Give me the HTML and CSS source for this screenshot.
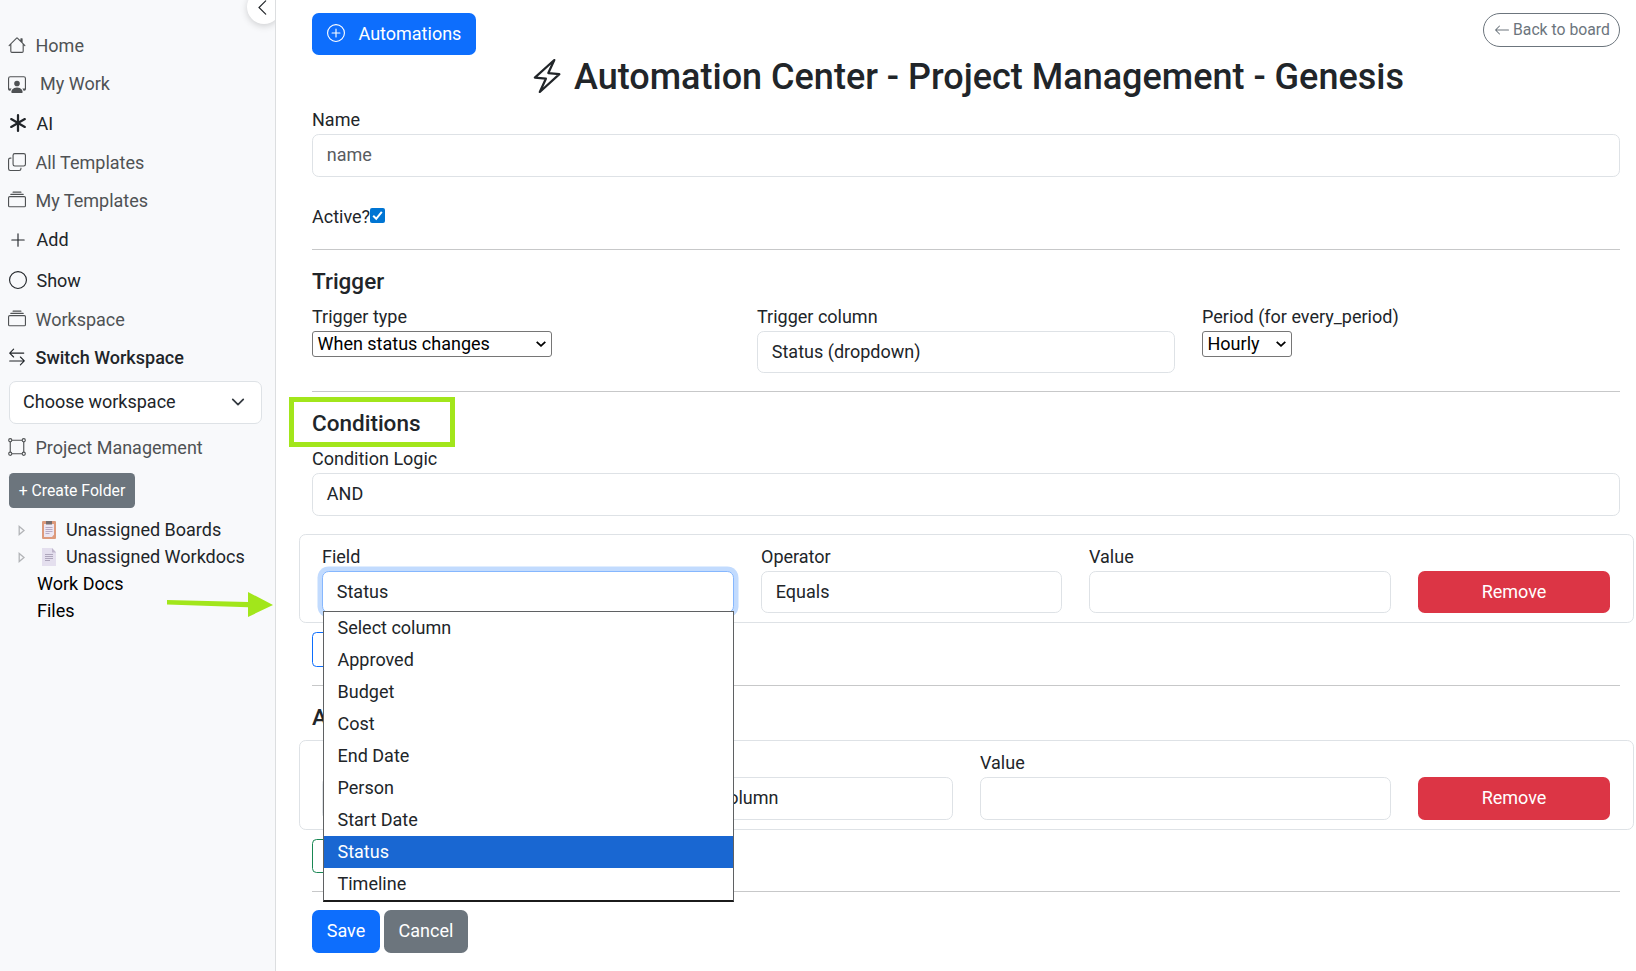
FILE: index.html
```html
<!DOCTYPE html>
<html lang="en">
<head>
<meta charset="utf-8">
<title>Automation Center</title>
<link rel="stylesheet" href="styles.css">
</head>
<body>
<div class="app">
  <aside class="sidebar">
    <div class="collapse"><svg class="ic-chev" viewBox="0 0 16 16"><path d="M11 1.7 4.7 8l6.3 6.3" fill="none" stroke="currentColor" stroke-width="1.1" stroke-linecap="round"/></svg></div>
    <nav class="nav">
      <a class="item"><svg class="ic" viewBox="0 0 16 16"><path d="M8.707 1.5a1 1 0 0 0-1.414 0L.646 8.146a.5.5 0 0 0 .708.708L2 8.207V13.5A1.5 1.5 0 0 0 3.5 15h9a1.5 1.5 0 0 0 1.5-1.5V8.207l.646.647a.5.5 0 0 0 .708-.708L13 5.793V2.5a.5.5 0 0 0-.5-.5h-1a.5.5 0 0 0-.5.5v1.293zM13 7.207V13.5a.5.5 0 0 1-.5.5h-9a.5.5 0 0 1-.5-.5V7.207l5-5z"/></svg>Home</a>
      <a class="item wide"><svg class="ic" viewBox="0 0 16 16"><path d="M4 16s-1 0-1-1 1-4 5-4 5 3 5 4-1 1-1 1zm4-5.95a2.5 2.5 0 1 0 0-5 2.5 2.5 0 0 0 0 5"/><path d="M2 1a2 2 0 0 0-2 2v9.5A1.5 1.5 0 0 0 1.5 14h.653a5.4 5.4 0 0 1 1.066-2H1V3a1 1 0 0 1 1-1h12a1 1 0 0 1 1 1v9h-2.219c.554.654.89 1.373 1.066 2h.653a1.5 1.5 0 0 0 1.5-1.5V3a2 2 0 0 0-2-2z"/></svg>My Work</a>
      <a class="item dark tall"><svg class="ic" viewBox="0 0 16 16"><path d="M8 0a1 1 0 0 1 1 1v5.268l4.562-2.634a1 1 0 1 1 1 1.732L10 8l4.562 2.634a1 1 0 1 1-1 1.732L9 9.732V15a1 1 0 1 1-2 0V9.732l-4.562 2.634a1 1 0 1 1-1-1.732L6 8 1.438 5.366a1 1 0 0 1 1-1.732L7 6.268V1a1 1 0 0 1 1-1"/></svg>AI</a>
      <a class="item"><svg class="ic" viewBox="0 0 16 16"><path fill-rule="evenodd" d="M4 2a2 2 0 0 1 2-2h8a2 2 0 0 1 2 2v8a2 2 0 0 1-2 2H6a2 2 0 0 1-2-2zm2-1a1 1 0 0 0-1 1v8a1 1 0 0 0 1 1h8a1 1 0 0 0 1-1V2a1 1 0 0 0-1-1zM2 5a1 1 0 0 0-1 1v8a1 1 0 0 0 1 1h8a1 1 0 0 0 1-1v-1h1v1a2 2 0 0 1-2 2H2a2 2 0 0 1-2-2V6a2 2 0 0 1 2-2h1v1z"/></svg>All Templates</a>
      <a class="item"><svg class="ic" viewBox="0 0 16 16"><path d="M2.5 3.5a.5.5 0 0 1 0-1h11a.5.5 0 0 1 0 1zm2-2a.5.5 0 0 1 0-1h7a.5.5 0 0 1 0 1zM0 13a1.5 1.5 0 0 0 1.5 1.5h13A1.5 1.5 0 0 0 16 13V6a1.5 1.5 0 0 0-1.5-1.5h-13A1.5 1.5 0 0 0 0 6zm1.5.5A.5.5 0 0 1 1 13V6a.5.5 0 0 1 .5-.5h13a.5.5 0 0 1 .5.5v7a.5.5 0 0 1-.5.5z"/></svg>My Templates</a>
      <a class="item dark add-item"><svg class="ic" viewBox="0 0 16 16"><path d="M8 2a.5.5 0 0 1 .5.5v5h5a.5.5 0 0 1 0 1h-5v5a.5.5 0 0 1-1 0v-5h-5a.5.5 0 0 1 0-1h5v-5A.5.5 0 0 1 8 2"/></svg>Add</a>
      <a class="item dark tall"><svg class="ic" viewBox="0 0 16 16"><path d="M8 15A7 7 0 1 1 8 1a7 7 0 0 1 0 14m0 1A8 8 0 1 0 8 0a8 8 0 0 0 0 16"/></svg>Show</a>
      <a class="item"><svg class="ic" viewBox="0 0 16 16"><path d="M2.5 3.5a.5.5 0 0 1 0-1h11a.5.5 0 0 1 0 1zm2-2a.5.5 0 0 1 0-1h7a.5.5 0 0 1 0 1zM0 13a1.5 1.5 0 0 0 1.5 1.5h13A1.5 1.5 0 0 0 16 13V6a1.5 1.5 0 0 0-1.5-1.5h-13A1.5 1.5 0 0 0 0 6zm1.5.5A.5.5 0 0 1 1 13V6a.5.5 0 0 1 .5-.5h13a.5.5 0 0 1 .5.5v7a.5.5 0 0 1-.5.5z"/></svg>Workspace</a>
      <a class="item dark bold"><svg class="ic" viewBox="0 0 16 16"><path d="M14 4.5H1.6M5 1 1.5 4.5 5 8M1.5 11.5h12.9M11 8l3.5 3.5L11 15" fill="none" stroke="currentColor" stroke-linecap="round" stroke-linejoin="round"/></svg>Switch Workspace</a>
    </nav>
    <div class="ws-select"><span>Choose workspace</span><svg class="ic-down" viewBox="0 0 16 16"><path d="m2 5 6 6 6-6" fill="none" stroke="#343a40" stroke-width="2" stroke-linecap="round" stroke-linejoin="round"/></svg></div>
    <a class="item project"><svg class="ic" viewBox="0 0 16 16"><g fill="none" stroke="currentColor"><circle cx="2" cy="2" r="1.4"/><circle cx="14" cy="2" r="1.4"/><circle cx="2" cy="14" r="1.4"/><circle cx="14" cy="14" r="1.4"/><path d="M3.5 2h9M3.5 14h9M2 3.5v9M14 3.5v9"/></g></svg>Project Management</a>
    <button class="create">+ Create Folder</button>
    <div class="tree">
      <div class="node"><svg class="tri" viewBox="0 0 8 10"><path d="M1.2 1v8l4.8-4z" fill="none" stroke="#b3b5b8" stroke-width="1.3"/></svg><svg class="doc" viewBox="0 0 14 18"><rect width="14" height="18" rx="1" fill="#dd9a7c"/><path d="M2 3h10v10.5L10 16H2z" fill="#ece6f2"/><path d="M4 0h6v3.5H4z" fill="#766c6c"/><path d="M3.5 6.5h7M3.5 8.5h7M3.5 10.5h7M3.5 12.5h4" stroke="#a99bb8" stroke-width=".8"/></svg>Unassigned Boards</div>
      <div class="node"><svg class="tri" viewBox="0 0 8 10"><path d="M1.2 1v8l4.8-4z" fill="none" stroke="#b3b5b8" stroke-width="1.3"/></svg><svg class="doc" viewBox="0 0 14 18"><path d="M0 0h10l4 4v14H0z" fill="#e4dfee"/><path d="m10 0 4 4.5h-4z" fill="#bfb6cc"/><path d="M3 6.5h8M3 8.5h8M3 10.5h8M3 12.5h5" stroke="#a79fb5" stroke-width=".9"/></svg>Unassigned Workdocs</div>
      <div class="leaf">Work Docs</div>
      <div class="leaf">Files</div>
    </div>
    <svg class="arrow" viewBox="0 0 106 26"><path d="M0 8 81 10V0l25 13-25 12V15.2L0 12.5z" fill="#a2e61b"/></svg>
  </aside>

  <main class="main">
    <header class="top">
      <button class="btn primary auto"><svg class="ic" viewBox="0 0 16 16"><path d="M8 15A7 7 0 1 1 8 1a7 7 0 0 1 0 14m0 1A8 8 0 1 0 8 0a8 8 0 0 0 0 16"/><path d="M8 4a.5.5 0 0 1 .5.5v3h3a.5.5 0 0 1 0 1h-3v3a.5.5 0 0 1-1 0v-3h-3a.5.5 0 0 1 0-1h3v-3A.5.5 0 0 1 8 4"/></svg><span>Automations</span></button>
      <button class="back"><svg class="ic-back" viewBox="0 0 16 16"><path fill-rule="evenodd" d="M15 8a.5.5 0 0 0-.5-.5H2.707l3.147-3.146a.5.5 0 1 0-.708-.708l-4 4a.5.5 0 0 0 0 .708l4 4a.5.5 0 0 0 .708-.708L2.707 8.5H14.5A.5.5 0 0 0 15 8"/></svg><span>Back to board</span></button>
    </header>
    <h2 class="title"><svg class="bolt" viewBox="0 0 16 16"><path d="M11.25.9 2.6 8.7l4.9.5-2.7 5.9 8.7-7.9-4.9-.5z" fill="none" stroke="currentColor" stroke-width="1" stroke-linejoin="round"/></svg><span>Automation Center - Project Management - Genesis</span></h2>

    <label class="label first">Name</label>
    <div class="control muted">name</div>
    <div class="active"><span>Active?</span><svg class="check" viewBox="0 0 15 15"><rect width="15" height="15" rx="2" fill="#0075d3"/><path d="m3.2 7.8 3 3 5.6-7" fill="none" stroke="#fff" stroke-width="2"/></svg></div>
    <hr class="rule">

    <h5 class="heading">Trigger</h5>
    <div class="trigger">
      <div class="col-type"><label class="label">Trigger type</label><div class="native"><span>When status changes</span><svg class="ic-nat" viewBox="0 0 10 6"><path d="m.7.8 4.3 4 4.3-4" fill="none" stroke="#000" stroke-width="1.8"/></svg></div></div>
      <div class="col-column"><label class="label">Trigger column</label><div class="control">Status (dropdown)</div></div>
      <div class="col-period"><label class="label">Period (for every_period)</label><div class="native hourly"><span>Hourly</span><svg class="ic-nat" viewBox="0 0 10 6"><path d="m.7.8 4.3 4 4.3-4" fill="none" stroke="#000" stroke-width="1.8"/></svg></div></div>
    </div>
    <hr class="rule">

    <h5 class="heading"><span class="marked">Conditions<i class="marker"></i></span></h5>
    <label class="label">Condition Logic</label>
    <div class="control">AND</div>
    <section class="card">
      <div class="field">
        <label class="label">Field</label><div class="control focus">Status</div>
        <div class="menu">
          <div class="opt">Select column</div><div class="opt">Approved</div><div class="opt">Budget</div><div class="opt">Cost</div><div class="opt">End Date</div><div class="opt">Person</div><div class="opt">Start Date</div><div class="opt sel">Status</div><div class="opt">Timeline</div>
        </div>
      </div>
      <div class="operator"><label class="label">Operator</label><div class="control">Equals</div></div>
      <div class="value"><label class="label">Value</label><div class="control"></div></div>
      <button class="btn danger">Remove</button>
    </section>
    <button class="add blue"></button>
    <hr class="rule">

    <h5 class="heading">Actions</h5>
    <section class="card second">
      <div class="type"><label class="label"></label><div class="control"></div></div>
      <div class="column"><label class="label"></label><div class="control">Select column</div></div>
      <div class="value"><label class="label">Value</label><div class="control"></div></div>
      <button class="btn danger">Remove</button>
    </section>
    <button class="add green"></button>
    <hr class="rule">
    <div class="actions"><button class="btn primary">Save</button><button class="btn grey">Cancel</button></div>
  </main>
</div>
</body>
</html>
```
FILE: styles.css
```css
* { box-sizing: border-box; }
body { margin: 0; background: #fff; font: 18px/27px Roboto, "Liberation Sans", sans-serif; color: #212529; }
button { font: inherit; margin: 0; }
svg { display: block; flex: none; fill: currentColor; }
.app { display: flex; height: 971px; overflow: hidden; }

.sidebar { position: relative; width: 276px; flex: none; padding: 26px 14px 0 9px; background: #f8f9fb; border-right: 1px solid #dcdee0; overflow: hidden; }
.collapse { position: absolute; left: 247px; top: -10px; width: 34px; height: 34px; border-radius: 50%; background: #fff; box-shadow: 0 2px 7px rgba(0,0,0,.17); display: flex; align-items: center; padding-left: 7px; }
.ic-chev { width: 17px; height: 17px; }
.item { display: flex; align-items: center; gap: 9.2px; height: 38px; color: #4f5254; }
.item .ic { margin-left: -0.7px; }
.item.wide { gap: 13.7px; height: 39px; }
.item.tall { height: 40px; padding-left: 1px; }
.item.add-item { height: 41px; padding-left: 1px; }
.item.dark { color: #212529; }
.item.bold { font-weight: 500; }
.ic { width: 18px; height: 18px; }
.ws-select { display: flex; align-items: center; justify-content: space-between; width: 253px; height: 43px; margin-top: 5px; padding: 0 16px 3px 13px; border: 1px solid #dee2e6; border-radius: 7px; background: #fff; }
.ic-down { width: 14px; height: 14px; margin-top: 2px; }
.item.project { height: 46px; }
.create { display: block; width: 126px; height: 35px; margin-top: 3px; padding: 0; border: 0; border-radius: 4.5px; background: #6c757d; color: #fff; font-size: 15.75px; }
.tree { padding-top: 8px; }
.node { display: flex; align-items: center; height: 27px; padding-left: 9px; }
.tri { width: 8px; height: 11px; margin: 2px 16px 0 0; }
.doc { width: 14px; height: 18px; margin-right: 10px; }
.leaf { height: 27px; padding-left: 28px; color: #000; }
.arrow { position: absolute; left: 167px; top: 592px; width: 106px; height: 26px; }

.main { flex: 1; min-width: 0; padding: 13px 16px 0 36px; }
.top { display: flex; justify-content: space-between; align-items: flex-start; height: 42px; }
.btn { height: 42px; padding: 0 0 1px; border: 0; border-radius: 6.75px; color: #fff; }
.primary { background: #0d6efd; }
.danger { background: #dc3545; }
.grey { background: #6c757d; }
.auto { display: flex; align-items: center; gap: 13.5px; width: 164px; padding: 0 0 2px 15px; }
.back { display: flex; align-items: center; gap: 3px; width: 137px; height: 34px; padding: 0 0 1px 10px; border: 1px solid #6c757d; border-radius: 17px; background: #fff; color: #6c757d; font-size: 15.75px; white-space: nowrap; }
.ic-back { width: 16px; height: 16px; }
.title { display: flex; align-items: center; justify-content: center; gap: 9px; height: 43px; margin: 0; padding: 1px 0 0 1px; font-size: 36px; font-weight: 500; white-space: nowrap; }
.bolt { width: 36px; height: 36px; margin-top: -2px; }
.label { display: block; height: 27px; line-height: 25px; }
.label.first { height: 36px; padding-top: 8px; line-height: 27px; }
.control { height: 43px; padding: 6px 13.8px; border: 1px solid #dee2e6; border-radius: 6.75px; background: #fff; line-height: 27px; }
.muted { color: #595c5f; }
.active { display: flex; align-items: center; height: 72px; padding-top: 6px; }
.check { width: 15px; height: 15px; margin-top: -2px; }
.rule { height: 1px; margin: 0; border: 0; background: #c7c8c9; }
.heading { height: 54px; margin: 0; padding-top: 18px; font-size: 22.5px; line-height: 27px; font-weight: 500; }
.trigger { display: flex; height: 87px; }
.trigger .control { height: 42px; }
.col-type { width: 445px; }
.col-column { width: 418px; margin-right: 27px; }
.native { display: flex; align-items: center; justify-content: space-between; width: 240px; height: 26px; padding: 0 5px 2px 4.5px; border: 1px solid #767676; border-radius: 3px; color: #000; }
.native.hourly { width: 90px; }
.ic-nat { width: 10px; height: 6px; margin-top: 2px; }
.marked { position: relative; }
.marker { position: absolute; left: -23px; top: -13px; width: 166px; height: 50px; border: 5px solid #a2e61b; }

.card { display: flex; align-items: flex-end; gap: 27px; height: 89px; margin: 18px -14px 0 -13px; padding: 0 23px 9px 22px; border: 1px solid #dee2e6; border-radius: 6.75px; }
.card .control { height: 42px; }
.card .btn { width: 192px; }
.field { position: relative; width: 412px; }
.operator { width: 301px; }
.value { flex: 1; }
.control.focus { border-color: #86b7fe; box-shadow: 0 0 0 4.5px #c2dbfe; }
.menu { position: absolute; z-index: 2; left: 1px; top: 67px; width: 411px; border: 1px solid #5f6163; border-bottom: 2px solid #1b1b1b; background: #fff; }
.opt { height: 32px; padding-left: 13.5px; line-height: 32px; }
.sel { background: #1967d2; color: #fff; }
.add { display: block; width: 140px; height: 35px; margin: 9px 0 18px; padding: 0; border: 1px solid; border-radius: 4.5px; background: #fff; }
.blue { color: #0d6efd; }
.green { height: 34px; color: #198754; }
.card.second { height: 90px; margin-top: 0; }
.second .control, .second .btn { height: 43px; }
.second .btn { padding-bottom: 2px; }
.second .type { width: 301px; }
.second .column { width: 303px; }
.actions { display: flex; gap: 4px; padding-top: 18px; }
.actions .btn { width: 68px; height: 43px; padding-bottom: 2px; }
.actions .grey { width: 84px; }
```
